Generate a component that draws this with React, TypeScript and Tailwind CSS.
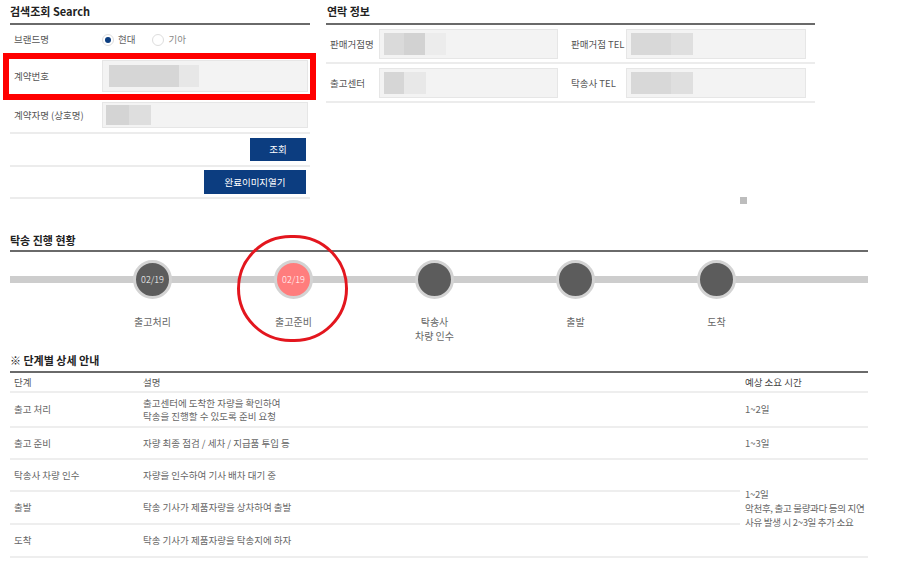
import React from 'react';

const steps = [
    { date: '02/19', label: ['출고처리'], active: false },
    { date: '02/19', label: ['출고준비'], active: true },
    { date: '', label: ['탁송사', '차량 인수'], active: false },
    { date: '', label: ['출발'], active: false },
    { date: '', label: ['도착'], active: false },
];

const SectionTitle: React.FC<{ children: React.ReactNode; className?: string }> = ({ children, className = '' }) => (
    <div className={`flex items-center border-b-2 border-[#6a6a6a] text-[11px] font-bold text-[#222] ${className}`}>
        {children}
    </div>
);

const Blur: React.FC<{ w: number; color: string }> = ({ w, color }) => (
    <div className={`h-full ${color}`} style={{ width: w }} />
);

const App: React.FC = () => {
    return (
        <div className="relative w-[900px] h-[564px] bg-white overflow-hidden font-['Noto_Sans_CJK_KR','Liberation_Sans',sans-serif] text-[#555]">
            {/* Top: search + contact */}
            <div className="flex">
                {/* Search */}
                <div className="ml-[10px] w-[300px]">
                    <SectionTitle className="h-[25px]">검색조회 Search</SectionTitle>

                    <div className="flex items-center h-[29px] text-[9.5px]">
                        <span className="w-[92px] pl-[4px] text-[#555]">브랜드명</span>
                        <div className="flex items-center gap-[4px]">
                            <span className="flex items-center justify-center w-[12px] h-[12px] rounded-full border border-[#ddd] bg-white">
                                <span className="w-[6px] h-[6px] rounded-full bg-[#0c3d80]" />
                            </span>
                            <span className="text-[#666]">현대</span>
                            <span className="ml-[13px] w-[12px] h-[12px] rounded-full border border-[#ddd] bg-white" />
                            <span className="text-[#888]">기아</span>
                        </div>
                    </div>

                    <div className="flex items-center h-[32px] mt-[6px] mb-[5px] text-[9.5px]">
                        <span className="w-[92px] pl-[4px] text-[#555]">계약번호</span>
                        <div className="flex-1 mr-[2px] h-full bg-[#f3f3f3] border border-[#e6e6e6] py-[4px] pl-[6px] flex">
                            <Blur w={70} color="bg-[#d6d6d6]" />
                            <Blur w={20} color="bg-[#e7e7e7]" />
                        </div>
                    </div>

                    <div className="flex items-center h-[37px] pt-[5px] pb-[4px] border-b-2 border-[#ececec] text-[9.5px]">
                        <span className="w-[92px] pl-[4px] text-[#555]">계약자명 (상호명)</span>
                        <div className="flex-1 mr-[2px] h-full bg-[#f3f3f3] border border-[#e6e6e6] py-[2px] pl-[3px] flex">
                            <Blur w={23} color="bg-[#d4d4d4]" />
                            <Blur w={22} color="bg-[#dedede]" />
                        </div>
                    </div>

                    <div className="flex justify-end pt-[4px] pb-[4px] pr-[4px] border-b-2 border-[#ececec]">
                        <button className="w-[56px] h-[23px] bg-[#0c3d80] text-white text-[9.5px]">조회</button>
                    </div>

                    <div className="flex justify-end pt-[3px] pb-[3px] pr-[4px] border-b-2 border-[#ececec]">
                        <button className="w-[102px] h-[24px] bg-[#0c3d80] text-white text-[9.5px]">완료이미지열기</button>
                    </div>
                </div>

                {/* Contact */}
                <div className="ml-[16px] w-[489px]">
                    <SectionTitle className="h-[25px] pl-[1px]">연락 정보</SectionTitle>

                    {[
                        ['판매거점명', '판매거점 TEL', 'a'],
                        ['출고센터', '탁송사 TEL', 'b'],
                    ].map(([l1, l2, k]) => (
                        <div key={k} className="flex items-center pt-[4px] pb-[3px] border-b-2 border-[#ececec] text-[9.5px]">
                            <span className="w-[53px] pl-[4px] text-[#555]">{l1}</span>
                            <div className="w-[179px] h-[30px] bg-[#f3f3f3] border border-[#e6e6e6] py-[3px] pl-[4px] flex">
                                {k === 'a' ? (
                                    <>
                                        <Blur w={20} color="bg-[#dadada]" />
                                        <Blur w={21} color="bg-[#d2d2d2]" />
                                        <Blur w={21} color="bg-[#ececec]" />
                                    </>
                                ) : (
                                    <>
                                        <Blur w={20} color="bg-[#d6d6d6]" />
                                        <Blur w={22} color="bg-[#e8e8e8]" />
                                    </>
                                )}
                            </div>
                            <span className="w-[68px] pl-[13px] text-[#555]">{l2}</span>
                            <div className="w-[180px] h-[30px] bg-[#f3f3f3] border border-[#e6e6e6] py-[3px] pl-[4px] flex">
                                <Blur w={40} color="bg-[#d8d8d8]" />
                                <Blur w={22} color="bg-[#dfdfdf]" />
                            </div>
                        </div>
                    ))}

                    <div className="ml-[414px] mt-[94px] w-[7px] h-[7px] bg-[#bdbdbd]" />
                </div>
            </div>

            {/* Progress */}
            <div className="mx-[10px] w-[858px]">
                <SectionTitle className="h-[22px] mt-[26px]">탁송 진행 현황</SectionTitle>

                <div className="relative mt-[8px]">
                    <div className="absolute left-0 right-0 top-[16px] h-[7px] bg-[#cdcdcd]" />
                    <div className="relative flex pl-[72px]">
                        {steps.map((s, i) => (
                            <div key={i} className="w-[141px] flex flex-col items-center">
                                <div
                                    className={`w-[39px] h-[39px] rounded-full border-[3px] border-[#d3d3d3] flex items-center justify-center text-white text-[9px] font-light ${
                                        s.active ? 'bg-[#ff7d7d]' : 'bg-[#5c5c5c]'
                                    }`}
                                >
                                    {s.date}
                                </div>
                                <div className="mt-[16px] text-[10px] leading-[14px] text-[#666] text-center h-[28px]">
                                    {s.label.map((l) => (
                                        <div key={l}>{l}</div>
                                    ))}
                                </div>
                            </div>
                        ))}
                    </div>
                </div>

                {/* Detail table */}
                <SectionTitle className="h-[24px] mt-[6px]">※ 단계별 상세 안내</SectionTitle>

                <div className="grid grid-cols-[128px_602px_128px] grid-rows-[20px_35px_32px_32px_33px_33px] text-[9.5px] leading-[13px] text-[#666]">
                    <div className="flex items-center pl-[4px] border-b-2 border-[#eeeeee] text-[#555]">단계</div>
                    <div className="flex items-center pl-[5px] border-b-2 border-[#eeeeee] text-[#555]">설명</div>
                    <div className="flex items-center pl-[5px] border-b-2 border-[#eeeeee] text-[#444]">예상 소요 시간</div>

                    <div className="flex items-center pl-[4px] border-b-2 border-[#eeeeee]">출고 처리</div>
                    <div className="flex flex-col justify-center pl-[5px] border-b-2 border-[#eeeeee]">
                        <div>출고센터에 도착한 자량을 확인하여</div>
                        <div>탁송을 진행할 수 있도록 준비 요청</div>
                    </div>
                    <div className="flex items-center pl-[5px] border-b-2 border-[#eeeeee]">1~2일</div>

                    <div className="flex items-center pl-[4px] border-b-2 border-[#eeeeee]">출고 준비</div>
                    <div className="flex items-center pl-[5px] border-b-2 border-[#eeeeee]">자량 최종 점검 / 세차 / 지급품 투입 등</div>
                    <div className="flex items-center pl-[5px] border-b-2 border-[#eeeeee]">1~3일</div>

                    <div className="flex items-center pl-[4px] border-b-2 border-[#eeeeee]">탁송사 차량 인수</div>
                    <div className="flex items-center pl-[5px] border-b-2 border-[#eeeeee]">자량을 인수하여 기사 배차 대기 중</div>
                    <div className="row-span-3 flex flex-col justify-center pl-[5px] border-b-2 border-[#eeeeee] leading-[14px] whitespace-nowrap tracking-[-0.3px]">
                        <div>1~2일</div>
                        <div>악천후, 출고 물량과다 등의 지연</div>
                        <div>사유 발생 시 2~3일 추가 소요</div>
                    </div>

                    <div className="flex items-center pl-[4px] border-b-2 border-[#eeeeee]">출발</div>
                    <div className="flex items-center pl-[5px] border-b-2 border-[#eeeeee]">탁송 기사가 제품자량을 상차하여 출발</div>

                    <div className="flex items-center pl-[4px] border-b-2 border-[#eeeeee]">도착</div>
                    <div className="flex items-center pl-[5px] border-b-2 border-[#eeeeee]">탁송 기사가 제품자량을 탁송지에 하자</div>
                </div>
            </div>

            {/* Annotations */}
            <div className="absolute left-[3px] top-[53px] w-[313px] h-[47px] border-[6px] border-[#ff0000]" />
            <div className="absolute left-[237px] top-[235px] w-[111px] h-[107px] rounded-full border-[3px] border-[#e3161e]" />
        </div>
    );
};

export default App;
